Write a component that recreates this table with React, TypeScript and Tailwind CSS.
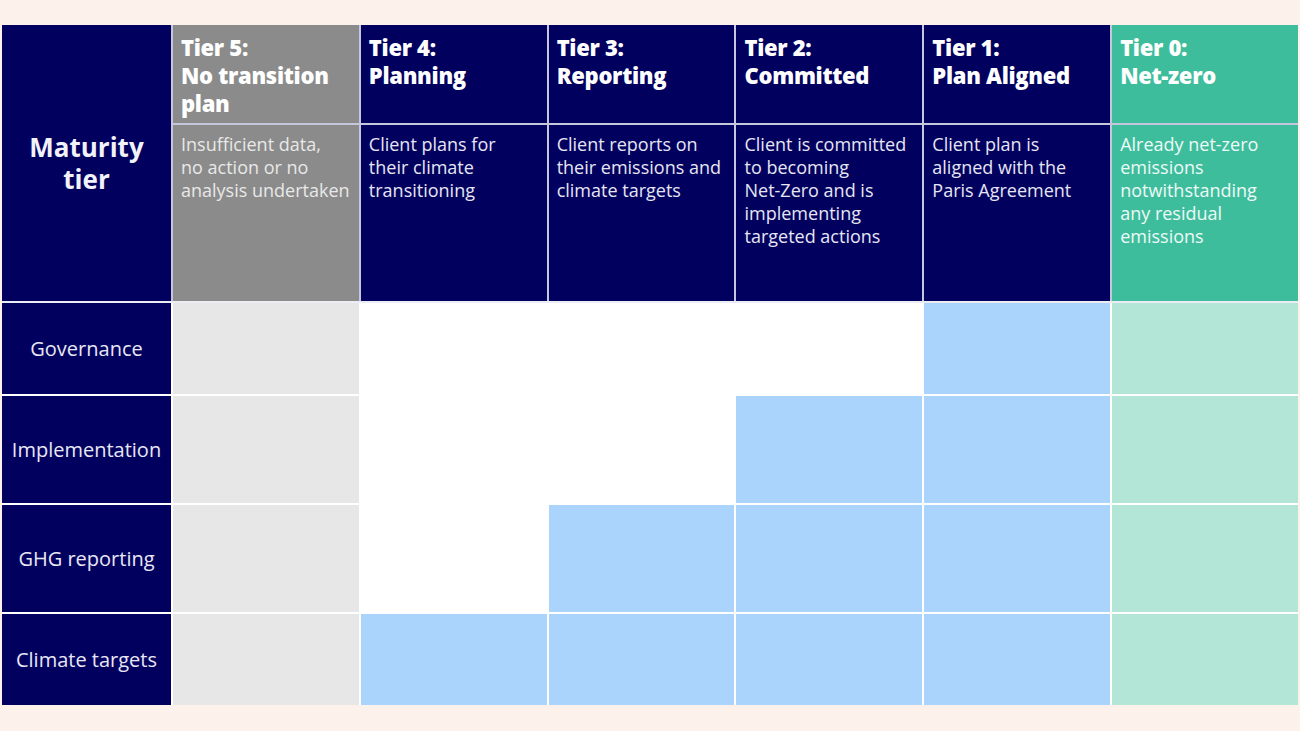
import React from 'react';

const font = { fontFamily: '"Open Sans", "Liberation Sans", sans-serif' };

type Tier = {
  tier: string;
  name: string;
  desc: string[];
  head: string;
  body: string;
  text: string;
};

const tiers: Tier[] = [
  {
    tier: 'Tier 5:',
    name: 'No transition plan',
    desc: ['Insufficient data,', 'no action or no', 'analysis undertaken'],
    head: 'bg-[#8b8b8b]',
    body: 'bg-[#e7e7e7]',
    text: 'text-[#e8e8e8]',
  },
  {
    tier: 'Tier 4:',
    name: 'Planning',
    desc: ['Client plans for', 'their climate', 'transitioning'],
    head: 'bg-[#02005f]',
    body: 'bg-[#aad4fb]',
    text: 'text-[#e6e6f3]',
  },
  {
    tier: 'Tier 3:',
    name: 'Reporting',
    desc: ['Client reports on', 'their emissions and', 'climate targets'],
    head: 'bg-[#02005f]',
    body: 'bg-[#aad4fb]',
    text: 'text-[#e6e6f3]',
  },
  {
    tier: 'Tier 2:',
    name: 'Committed',
    desc: ['Client is committed', 'to becoming', 'Net-Zero and is', 'implementing', 'targeted actions'],
    head: 'bg-[#02005f]',
    body: 'bg-[#aad4fb]',
    text: 'text-[#e6e6f3]',
  },
  {
    tier: 'Tier 1:',
    name: 'Plan Aligned',
    desc: ['Client plan is', 'aligned with the', 'Paris Agreement'],
    head: 'bg-[#02005f]',
    body: 'bg-[#aad4fb]',
    text: 'text-[#e6e6f3]',
  },
  {
    tier: 'Tier 0:',
    name: 'Net-zero',
    desc: ['Already net-zero', 'emissions', 'notwithstanding', 'any residual', 'emissions'],
    head: 'bg-[#3ebd9d]',
    body: 'bg-[#b3e6d7]',
    text: 'text-[#eefaf6]',
  },
];

// index of the first tier column that is filled for each dimension
const rows = [
  { label: 'Governance', from: 4, h: 'h-[91px]' },
  { label: 'Implementation', from: 3, h: 'h-[107px]' },
  { label: 'GHG reporting', from: 2, h: 'h-[107px]' },
  { label: 'Climate targets', from: 1, h: 'h-[91px]' },
];

export default function App() {
  return (
    <div className="min-h-screen w-full bg-[#fdf1ec] pt-[25px] pl-[2px]" style={font}>
      <div className="flex w-[1296px] flex-col gap-[2px] bg-[#ececf4]">
        {/* header */}
        <div className="grid grid-cols-[169px_repeat(6,minmax(0,1fr))] grid-rows-[98px_176px] gap-[2px] bg-[#c6c6dc]">
          <div className="row-span-2 flex flex-col items-center justify-center bg-[#02005f] text-center text-[26px] font-bold leading-[32px] text-[#f2f2fa]">
            <div>Maturity</div>
            <div>tier</div>
          </div>
          {tiers.map((t) => (
            <div key={t.tier} className={`${t.head} px-2 pt-[8px] text-[22px] font-extrabold leading-[28px] tracking-[-0.3px] text-white`}>
              <div>{t.tier}</div>
              <div>{t.name}</div>
            </div>
          ))}
          {tiers.map((t) => (
            <div key={t.tier + 'd'} className={`${t.head} ${t.text} px-2 pt-[8px] text-[18px] leading-[23px]`}>
              {t.desc.map((line, i) => (
                <div key={i} className="whitespace-nowrap">
                  {line}
                </div>
              ))}
            </div>
          ))}
        </div>

        {/* body */}
        <div className="grid grid-cols-[169px_repeat(6,minmax(0,1fr))] gap-[2px] bg-white">
          {rows.map((r) => (
            <React.Fragment key={r.label}>
              <div className={`${r.h} flex items-center justify-center bg-[#02005f] text-[20px] text-[#e8e8f4]`}>
                {r.label}
              </div>
              {tiers.map((t, i) => {
                let bg = 'bg-white';
                if (i === 0 || i >= r.from) bg = t.body;
                return <div key={t.tier} className={bg} />;
              })}
            </React.Fragment>
          ))}
        </div>
      </div>
    </div>
  );
}
